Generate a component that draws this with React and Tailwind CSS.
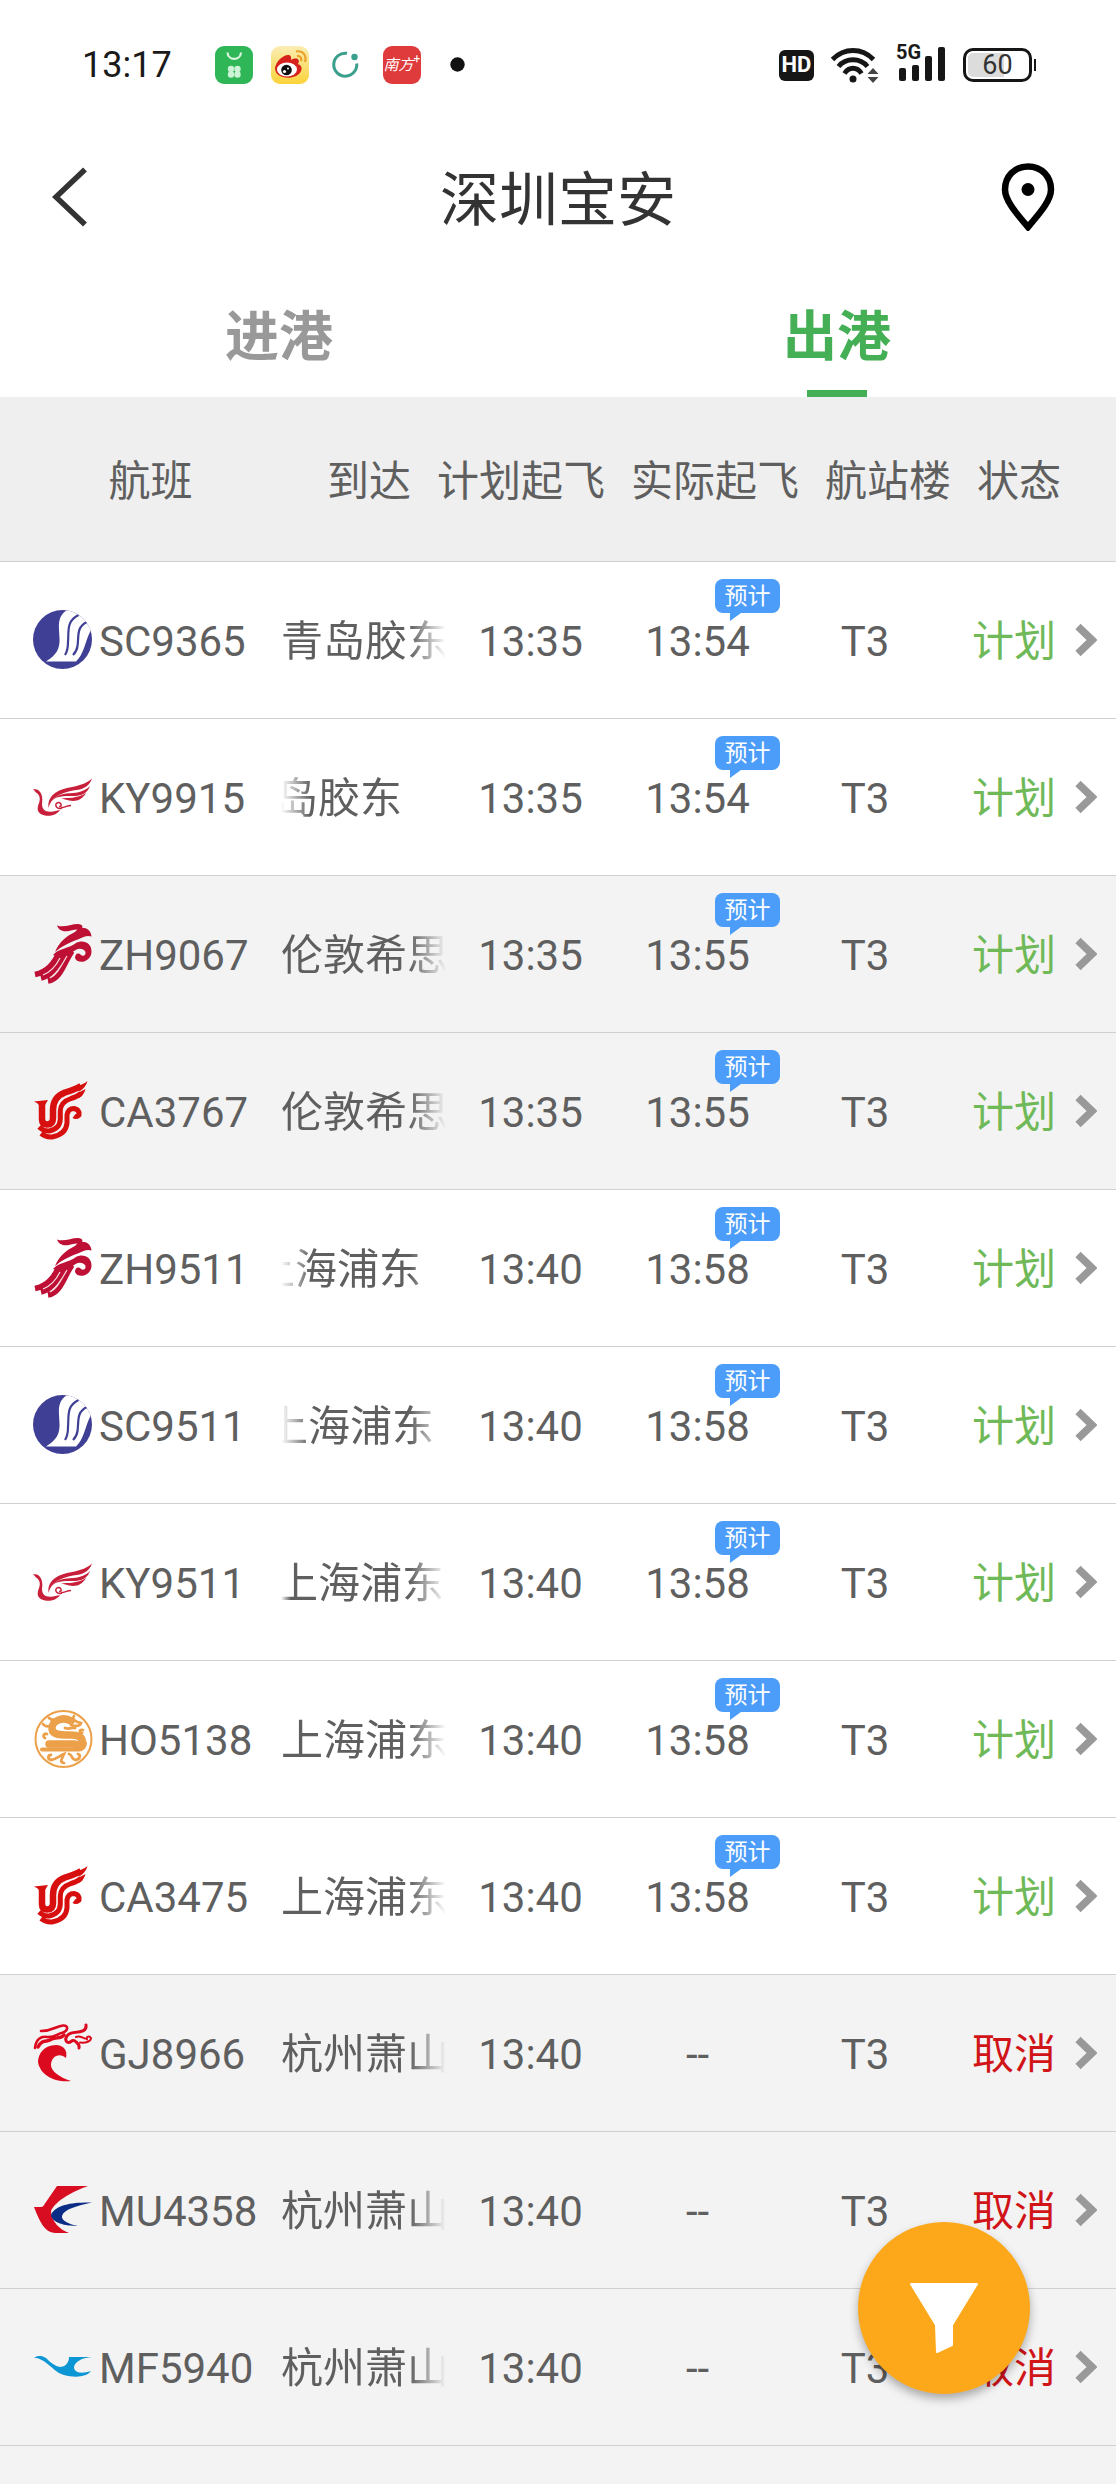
import { useState } from 'react';
import clsx from 'clsx';

// offset: how far the scrolling destination name has moved to the left
const flights = [
  { code: 'SC9365', city: '青岛胶东', plan: '13:35', actual: '13:54', offset: 0 },
  { code: 'KY9915', city: '青岛胶东', plan: '13:35', actual: '13:54', offset: 47 },
  { code: 'ZH9067', city: '伦敦希思', plan: '13:35', actual: '13:55', offset: 0, shaded: true },
  { code: 'CA3767', city: '伦敦希思', plan: '13:35', actual: '13:55', offset: 0, shaded: true },
  { code: 'ZH9511', city: '上海浦东', plan: '13:40', actual: '13:58', offset: 28 },
  { code: 'SC9511', city: '上海浦东', plan: '13:40', actual: '13:58', offset: 15 },
  { code: 'KY9511', city: '上海浦东', plan: '13:40', actual: '13:58', offset: 5 },
  { code: 'HO5138', city: '上海浦东', plan: '13:40', actual: '13:58', offset: 0 },
  { code: 'CA3475', city: '上海浦东', plan: '13:40', actual: '13:58', offset: 0 },
  { code: 'GJ8966', city: '杭州萧山', plan: '13:40', actual: null, offset: 0, shaded: true },
  { code: 'MU4358', city: '杭州萧山', plan: '13:40', actual: null, offset: 0, shaded: true },
  { code: 'MF5940', city: '杭州萧山', plan: '13:40', actual: null, offset: 0, shaded: true },
];

const logos = {
  SC: (
    <>
      <clipPath id="sc-disc">
        <circle cx="29.500" cy="29.500" r="29.500" />
      </clipPath>
      <g clipPath="url(#sc-disc)">
        <rect width="60" height="60" fill="#3f3f96" />
        <path d="M34 0C22 8 27 20 26.500 32C26 42 20 47 13 51.500L43 51.500C51 44 52 32 57 22L62 10L50 -4Z" fill="#fff" />
        <path d="M45.500 5C33 11 36 22 35 32C35 38 34 42 32 45M54 12C43 17 46 27 44.500 36C44 40 42 43 40 45" fill="none" stroke="#3f3f96" strokeWidth="2.200" />
      </g>
    </>
  ),
  KY: (
    <g fill="#c8203a">
      <path d="M15.500 41C14 30 22 24 34 21C45 19 53 17 59 11.500C56 20 50 22.500 40 23.500C28 26 18 30 15.500 41Z" />
      <path d="M19 34C23 27.500 31 26.500 40 26C48 25.500 53 23 57 19C54 27 48 29 40 29C30 29 23 29 19 34Z" />
      <path d="M28 31.500C34 30.500 44 32 53 26C49 33 43 35 36 33.500C32 32.500 30 31.500 28 31.500Z" />
      <path d="M0 22L4 22.500C9 25 10 31 9 37C9 43 13 45.500 20 44.500L27 43C24 48 17 49.500 12 48.500C5 47 3 43 6 36C8 31 6 27 3 25.500Z" />
      <path d="M29 41C24 43 21 38 24 36C28 34 30 40 26 39.500M28 40.500C31 41 34 38.500 38 38.500" fill="none" stroke="#c8203a" strokeWidth="1.500" />
    </g>
  ),
  ZH: (
    <g fill="#be0f35">
      <path d="M24 1.500C31 4 38 0 45 0C50 0 51 4 47 5C43 6 40 5.500 36 7C31 8 26 7 24 1.500Z" />
      <path d="M22 28C26 18 34 12 41 8.500C45 6 43 5 47 4C53 3 58 6 58.500 12.500C54 11 50 13 46 15C37 18 29 22 22 28Z" />
      <path d="M20 31C26 24 35 25 43 19C50 15 59 19 58.500 28C58 38 45 41 42 34C42 30 45 28 48 31C50 33 54 31 52 27C48 23 42 25 38 30L26 33Z" />
      <path d="M26 29C21 39 15 48 2 50.500M32 29C25 39 21 51 8 54M39 27C31 38 28 55 15 57" fill="none" stroke="#be0f35" strokeWidth="5.600" />
      <path d="M27 34C23 42 18 48 10 51M34 32C28 42 24 51 17 54" fill="none" stroke="#f7dfe3" strokeWidth="1.200" />
    </g>
  ),
  CA: (
    <g fill="none" stroke="#d7100f">
      <path d="M9 22V38Q9 43.500 14 43.500Q20 43.500 20 37V29Q20 16 32 11.500Q42 8.500 48 5" strokeWidth="6.500" />
      <path d="M6 46Q11 50.500 16 50Q27 48 27.300 38V30Q27.500 21 38 17.500Q45 15.500 48 12" strokeWidth="5" />
      <path d="M8 52.500Q14 57 20 55.800Q33 53 34 42V34Q35 27.500 41 27.500Q47 29 46 34Q43 36.500 41 35" strokeWidth="5" />
      <path d="M1 20.500L15 19L12 24H6Q5 22 1 20.500ZM38 6.500Q50 4 54.500 0Q53 6 47 10ZM43 13L52.500 8Q51 14 46 17Z" fill="#d7100f" stroke="none" />
    </g>
  ),
  HO: (
    <g fill="none" stroke="#eca04a" strokeLinecap="round">
      <circle cx="30.500" cy="30" r="28" strokeWidth="2" />
      <path d="M38 12C30 7 18 12 19 20C20 27 30 26 37 26C45 26 50 28 49 33C48 36 44 36 40 35H16" strokeWidth="7.500" />
      <path d="M9 40.500H45C50 41 52 37 52 34" strokeWidth="4" />
      <path d="M10 15C13 19 16 17 19 17M16 9C20 13 25 10 28 8M41 7C38 11 44 13 48 14C47 18 42 17 38 16M32 19C36 21 39 18 42 19M50 21C46 20 46 24 49 24M14 25C11 24 9 28 12 29M18 46C15 46 14 50 18 51C24 50 26 47 31 45C29 50 26 53 31 54M36 45C40 46 38 51 43 51C47 50 48 46 45 45" strokeWidth="2.800" />
    </g>
  ),
  GJ: (
    <g fill="#dc0a1e">
      <path d="M33 35C35 27 30 22 23 22C11 22 5 31 5 39C7 52 22 60 38 58C26 54 18 48 18 42C18 34 26 29 33 35Z" />
      <g fill="none" stroke="#dc0a1e" strokeWidth="2.600" strokeLinecap="round">
        <path d="M2 25C3 16 8 13 14 14C22 15 25 10 30 9.500C35 8 36 2 30 2.500C23 3 20 8 8 8" />
        <path d="M5 24C10 15 14 20 19 16C23 14 28 16 31 12" strokeWidth="3.500" />
        <path d="M53 2C54 9 46 9 41 9.500C34 10 31 16 34 19C38 21 38 16 42 18C44 20 47 21 46 25" strokeWidth="3" />
        <path d="M43 14C47 12 49 15 52 15.500M47 19.500C52 20 58 19 58 15C56 12 53 14 54 16.500" strokeWidth="2" />
      </g>
    </g>
  ),
  MU: (
    <>
      <path d="M24 6H55C41 11 23 20 18 31C18 41 27 50 36 53H22C11 52 7 42 1 27H8C10 27 11 25 13 22Z" fill="#d80d22" />
      <path d="M59 22.500C42 22 22 24 18 35C19 43 32 46 45 46C35 44 28 40 29 36C31 29 44 26 59 22.500Z" fill="#0b2d86" />
    </>
  ),
  MF: (
    <path d="M1 20.500C4 18.500 9 18 13 21C18 26 22 29 27 30C32 30 36 26 36 20H59C48 21 41 25 41 31C42 36 49 37 58 34C54 40 42 41 31 38C20 35 14 22 1 20.500Z" fill="#0c96d4" />
  ),
};

function StatusBar() {
  return (
    <div className="flex h-[130px] items-center justify-between pr-20 pl-[82px] text-[#1a1a1a]">
      <div className="flex items-center">
        <span className="w-[133px] text-[36px] leading-10">13:17</span>
        <div className="flex items-center gap-[18px]">
          <svg viewBox="0 0 38 38" className="size-[38px]">
            <rect width="38" height="38" rx="9" fill="#2fb657" />
            <path d="M12.500 6.500C13 15 25.500 15 26 6.500" fill="none" stroke="#d9f5df" strokeWidth="2.200" />
            <g fill="#cdf3d6">
              <circle cx="16" cy="23" r="3.200" />
              <circle cx="22.500" cy="23" r="3.200" />
              <circle cx="16" cy="28.500" r="3.200" />
              <circle cx="22.500" cy="28.500" r="3.200" />
            </g>
          </svg>
          <svg viewBox="0 0 38 38" className="size-[38px]">
            <defs>
              <linearGradient id="weibo" x2="0" y2="1">
                <stop stopColor="#faedb4" />
                <stop offset="1" stopColor="#fbd33a" />
              </linearGradient>
            </defs>
            <rect width="38" height="38" rx="9" fill="url(#weibo)" />
            <path d="M4 22C5 15 13 8 18 9C21 10 20 13 20 14C25 11 30 13 27 18C33 20 31 27 25 30C16 34 4 31 4 22Z" fill="#d6211c" />
            <ellipse cx="16" cy="23.500" rx="10" ry="7" fill="#fff" />
            <circle cx="15.500" cy="24" r="5.300" fill="#111" />
            <circle cx="13.500" cy="25.500" r="1.600" fill="#fff" />
            <circle cx="17" cy="22.500" r="1" fill="#fff" />
            <path d="M25 5.500C32 4 36 10 34 16M26 10C29 9.500 31 12 30 15" fill="none" stroke="#e9a12c" strokeWidth="2.200" />
          </svg>
          <svg viewBox="0 0 38 38" className="size-[38px]">
            <path d="M20 7.300A11.500 11.500 0 1 0 29.700 17.500" fill="none" stroke="#3a9f8c" strokeWidth="3" />
            <circle cx="27.500" cy="11" r="3.200" fill="#3a9f8c" />
          </svg>
          <div className="flex size-[38px] items-center justify-center rounded-[9px] bg-[#df3a3c] text-white">
            <span className="text-[15px] leading-5 italic">南方</span>
            <span className="-mt-3 text-[12px] leading-3">+</span>
          </div>
          <svg viewBox="0 0 38 38" className="size-[38px]">
            <circle cx="18.500" cy="18.500" r="7.200" fill="#111" />
          </svg>
        </div>
      </div>
      <div className="flex items-center gap-[17px]">
        <span className="flex h-[31px] w-[35px] items-center justify-center rounded-md bg-[#161616] text-[22px] leading-6 font-bold text-white">
          HD
        </span>
        <svg viewBox="0 0 48 38" className="h-[38px] w-12">
          <g fill="none" stroke="#161616" strokeWidth="4.800">
            <path d="M1.500 13.500C13 1.500 31 1.500 42.500 13.500" />
            <path d="M7.500 20.500C15 11.500 29 11.500 36.500 20.500" />
            <path d="M13.500 27.500C18 20.500 26 20.500 30.500 27.500" />
          </g>
          <circle cx="22" cy="33" r="3.500" fill="#161616" />
          <path d="M42 22L47.500 28H36.500ZM42 37L36.500 31H47.500Z" fill="#444" />
        </svg>
        <div className="relative">
          <svg viewBox="0 0 50 38" className="h-[38px] w-[50px]">
            <g fill="#161616">
              <rect x="3" y="22" width="7" height="13" rx="2" />
              <rect x="16" y="19" width="7" height="16" rx="2" />
              <rect x="29" y="10" width="7" height="25" rx="2" />
              <rect x="42" y="1" width="7" height="34" rx="2" />
            </g>
          </svg>
          <span className="absolute -top-1.5 left-0 text-[20px] leading-6 font-bold">5G</span>
        </div>
        <div className="flex items-center gap-0.5">
          <div className="flex h-[34px] w-[69px] items-center justify-center rounded-[10px] border-3 border-[#161616] bg-linear-to-r from-[#dcdcdc] from-60% to-white to-60% bg-clip-content p-0.5 text-[27px] leading-7 text-[#333]">
            60
          </div>
          <div className="h-3 w-0.5 bg-[#161616]" />
        </div>
      </div>
    </div>
  );
}

function FlightRow({ flight }) {
  const { code, city, plan, actual, offset, shaded } = flight;
  return (
    <tr
      className={clsx(
        'grid h-[157px] grid-cols-[281fr_165fr_169fr_165fr_170fr_166fr] items-center border-b border-[#d0d0d0]',
        shaded ? 'bg-[#f3f3f3]' : 'bg-white'
      )}
    >
      <td className="flex items-center gap-[6px] pl-[33px]">
        <svg viewBox="0 0 60 60" className="size-[60px] shrink-0">{logos[code.slice(0, 2)]}</svg>
        <span className="pt-1">{code}</span>
      </td>
      <td
        className={clsx(
          'min-w-0 overflow-hidden pt-1 whitespace-nowrap',
          offset === 0 && 'mask-[linear-gradient(to_right,black_78%,transparent)]',
          offset > 0 && offset < 10 && 'mask-[linear-gradient(to_right,transparent,black_6%,black_78%,transparent)]',
          offset >= 10 && 'mask-[linear-gradient(to_right,transparent,black_18%,black_78%,transparent)]'
        )}
      >
        <span className="inline-block" style={{ marginLeft: -offset }}>{city}</span>
      </td>
      <td className="pt-1 text-center">{plan}</td>
      <td className="relative pt-1 text-center">
        {actual || '--'}
        {actual && (
          <span className="absolute -top-[31px] right-0 flex h-[34px] w-[65px] items-center justify-center rounded-lg bg-[#4c9dfa] pt-0.5 text-[23px] leading-7 text-white">
            预计
            <svg viewBox="0 0 11 8" className="absolute top-full left-[15px] h-2 w-[11px]">
              <path d="M0 0H11L0 8Z" fill="#4c9dfa" />
            </svg>
          </span>
        )}
      </td>
      <td className="pt-1 text-center">T3</td>
      <td className="flex items-center justify-end gap-[19px] pr-[19px]">
        <span className={clsx('pt-1', actual ? 'text-[#6fb958]' : 'text-[#d01418]')}>
          {actual ? '计划' : '取消'}
        </span>
        <button type="button" aria-label={`${code} 详情`}>
          <svg viewBox="0 0 22 34" className="h-[34px] w-[22px]">
            <path d="M3 3.500L17 17L3 30.500" fill="none" stroke="#999" strokeWidth="7.500" />
          </svg>
        </button>
      </td>
    </tr>
  );
}

export default function App() {
  const [tab, setTab] = useState('出港');

  return (
    <div className="min-h-screen bg-[#f3f3f3] font-[Roboto,'Noto_Sans_CJK_SC',sans-serif] text-[#5f5f5f]">
      <div className="bg-white">
        <StatusBar />

        <header className="flex h-[134px] items-center justify-between pr-[61px] pl-[51px]">
          <button type="button" aria-label="返回" className="w-16">
            <svg viewBox="0 0 40 60" className="h-[60px] w-10">
              <path d="M34 2.500L5 30L34 57.500" fill="none" stroke="#333" strokeWidth="5.500" />
            </svg>
          </button>
          <h1 className="pt-2 text-[59px] leading-[72px] text-[#333]">深圳宝安</h1>
          <button type="button" aria-label="机场位置">
            <svg viewBox="0 0 54 68" className="h-[68px] w-[54px]">
              <path d="M27 3.500C13 3.500 4 14 4 26.500C4 37 14 49 27 64C40 49 50 37 50 26.500C50 14 41 3.500 27 3.500Z" fill="none" stroke="#000" strokeWidth="6.500" />
              <circle cx="27" cy="26.500" r="6.500" />
            </svg>
          </button>
        </header>

        <div role="tablist" className="flex h-[133px]">
          {['进港', '出港'].map(name => (
            <button
              key={name}
              type="button"
              role="tab"
              aria-selected={tab === name}
              onClick={() => setTab(name)}
              className={clsx(
                'flex flex-1 flex-col items-center justify-between pt-[38px] text-[54px] leading-[72px] font-bold',
                tab === name ? 'text-[#45af55]' : 'text-[#999]'
              )}
            >
              {name}
              <span className={clsx('h-[7px] w-[60px]', tab === name && 'bg-[#45af55]')} />
            </button>
          ))}
        </div>
      </div>

      <table className="block text-[42px] leading-[56px]">
        <thead className="block">
          <tr className="flex h-[165px] items-center gap-[26px] border-b border-[#d0d0d0] bg-[#efefef] pt-1.5 pr-[55px]">
            <th className="flex-1 font-normal">航班</th>
            <th className="font-normal">到达</th>
            <th className="font-normal">计划起飞</th>
            <th className="font-normal">实际起飞</th>
            <th className="font-normal">航站楼</th>
            <th className="font-normal">状态</th>
          </tr>
        </thead>
        <tbody className="block">
          {flights.map(f => (
            <FlightRow key={f.code} flight={f} />
          ))}
        </tbody>
      </table>

      {/* Filter button */}
      <button
        type="button"
        aria-label="筛选"
        className="fixed right-[86px] bottom-[90px] flex size-[172px] items-center justify-center rounded-full bg-[#fda81a] shadow-[0_5px_10px_rgba(0,0,0,0.3)]"
      >
        <svg viewBox="0 0 70 70" className="mt-5 size-[70px]">
          <path d="M2 1H68L43 42V62L28 69L27 42Z" fill="#fff" stroke="#fff" strokeWidth="2" strokeLinejoin="round" />
        </svg>
      </button>
    </div>
  );
}
